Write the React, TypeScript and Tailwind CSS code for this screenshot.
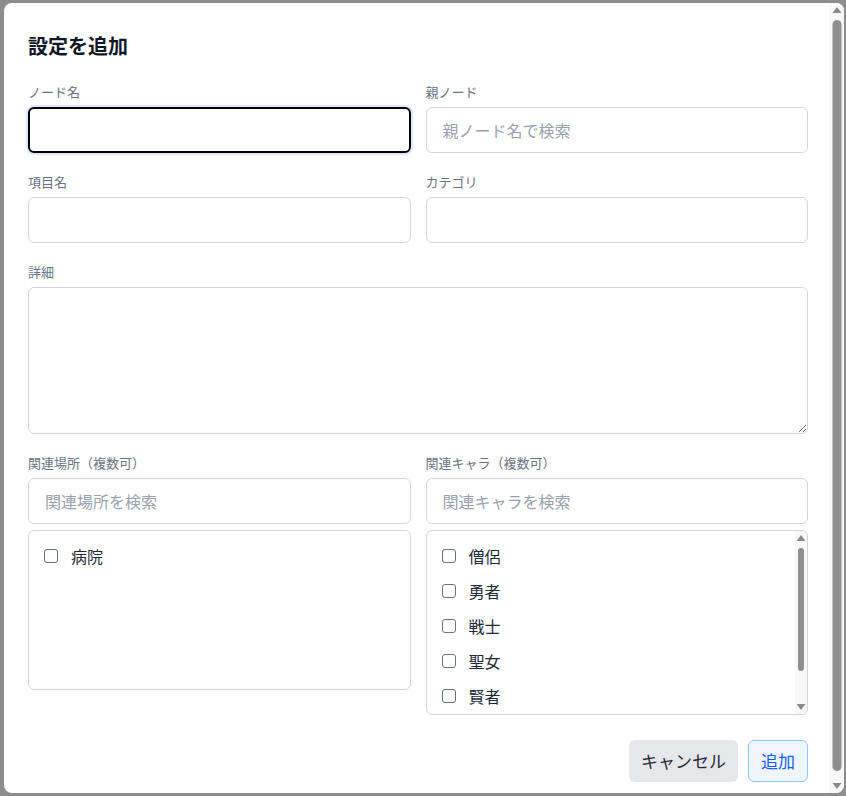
import React from 'react';

const font = { fontFamily: '"Noto Sans CJK JP", "Noto Sans", sans-serif' };

const Label: React.FC<{ children: React.ReactNode }> = ({ children }) => (
    <div className="text-[13px] leading-[18px] text-gray-500 mb-[6px]">{children}</div>
);

const baseInput = 'w-full h-[46px] rounded-md px-4 text-[16px] text-gray-800 placeholder:text-gray-400 outline-none';
const inputCls = baseInput + ' border border-gray-300';

const Check: React.FC<{ name: string }> = ({ name }) => (
    <label className="flex items-center gap-[13px] h-[35px] text-[16px] text-gray-800 shrink-0">
        <span className="w-[14px] h-[14px] rounded-[3px] border border-gray-500 bg-white" />
        {name}
    </label>
);

// drawn scrollbar track (arrows + thumb)
const ScrollBar: React.FC<{ thumbTop: number; thumbH: number; w: number }> = ({ thumbTop, thumbH, w }) => (
    <div className="relative h-full bg-[#f8f8f8] shrink-0" style={{ width: w }}>
        <svg className="absolute top-[4px] left-1/2 -translate-x-1/2" width="9" height="6" viewBox="0 0 9 6">
            <path d="M0 6 L4.5 0 L9 6 Z" fill="#8a8a8a" />
        </svg>
        <div
            className="absolute left-1/2 -translate-x-1/2 rounded-full bg-[#8f8f8f]"
            style={{ top: thumbTop, height: thumbH, width: w - 6 }}
        />
        <svg className="absolute bottom-[4px] left-1/2 -translate-x-1/2" width="9" height="6" viewBox="0 0 9 6">
            <path d="M0 0 L4.5 6 L9 0 Z" fill="#8a8a8a" />
        </svg>
    </div>
);

export default function App() {
    const charas = ['僧侶', '勇者', '戦士', '聖女', '賢者'];
    return (
        <div className="w-[846px] h-[796px] bg-[#8d8d8d] pt-[3px] pl-[4px]" style={font}>
            <div className="w-[840px] h-[790px] bg-white rounded-lg overflow-hidden flex">
                <div className="flex-1 pl-[24px] pr-[21px] pt-[29px]">
                    <h2 className="text-[20px] leading-[28px] font-bold text-gray-900 mb-[23px]">設定を追加</h2>
                    <div className="grid grid-cols-2 gap-x-[15px]">
                        <div>
                            <Label>ノード名</Label>
                            <input className={baseInput + ' border-2 border-black ring-2 ring-blue-100'} />
                        </div>
                        <div>
                            <Label>親ノード</Label>
                            <input className={inputCls} placeholder="親ノード名で検索" />
                        </div>
                    </div>
                    <div className="grid grid-cols-2 gap-x-[15px] mt-[20px]">
                        <div>
                            <Label>項目名</Label>
                            <input className={inputCls} />
                        </div>
                        <div>
                            <Label>カテゴリ</Label>
                            <input className={inputCls} />
                        </div>
                    </div>
                    <div className="mt-[20px]">
                        <Label>詳細</Label>
                        <textarea className="w-full h-[147px] rounded-md border border-gray-300 px-4 py-2 block outline-none" />
                    </div>
                    <div className="grid grid-cols-2 gap-x-[15px] mt-[20px] items-start">
                        <div>
                            <Label>関連場所（複数可）</Label>
                            <input className={inputCls} placeholder="関連場所を検索" />
                            <div className="mt-[6px] h-[160px] rounded-md border border-gray-300 px-[15px] py-[7px]">
                                <Check name="病院" />
                            </div>
                        </div>
                        <div>
                            <Label>関連キャラ（複数可）</Label>
                            <input className={inputCls} placeholder="関連キャラを検索" />
                            <div className="mt-[6px] h-[185px] rounded-md border border-gray-300 overflow-hidden flex">
                                <div className="flex-1 flex flex-col pl-[15px] pt-[7px]">
                                    {charas.map((c) => (
                                        <Check key={c} name={c} />
                                    ))}
                                </div>
                                <ScrollBar thumbTop={17} thumbH={123} w={12} />
                            </div>
                        </div>
                    </div>
                    <div className="flex justify-end gap-[10px] mt-[25px]">
                        <button className="h-[42px] px-[12px] rounded-md bg-gray-200 text-[17px] text-gray-800">キャンセル</button>
                        <button className="h-[42px] px-[12px] rounded-md bg-blue-50 border border-blue-300 text-[17px] text-blue-600">追加</button>
                    </div>
                </div>
                <ScrollBar thumbTop={17} thumbH={751} w={15} />
            </div>
        </div>
    );
}
